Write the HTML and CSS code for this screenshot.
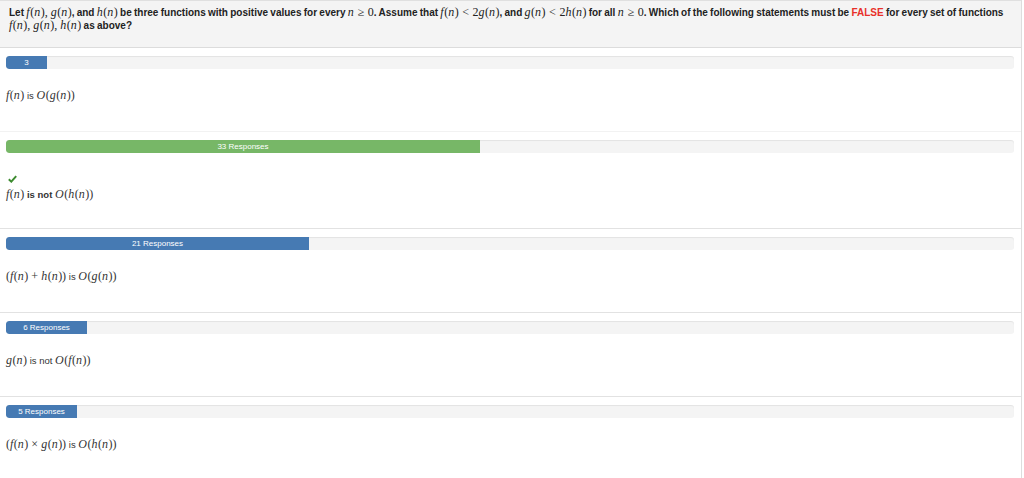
FILE: index.html
```html
<!DOCTYPE html>
<html>
<head>
<meta charset="utf-8">
<link rel="stylesheet" href="styles.css">
</head>
<body>
<div class="panel">
  <div class="question">
    Let <span class="m"><i>f</i>(<i>n</i>)<span class="cm">,</span><i>g</i>(<i>n</i>)</span>, and <span class="m"><i>h</i>(<i>n</i>)</span> be three functions with positive values for every <span class="m"><i>n</i><span class="rel">≥</span>0</span>. Assume that <span class="m"><i>f</i>(<i>n</i>)<span class="rel">&lt;</span>2<i>g</i>(<i>n</i>)</span>, and <span class="m"><i>g</i>(<i>n</i>)<span class="rel">&lt;</span>2<i>h</i>(<i>n</i>)</span> for all <span class="m"><i>n</i><span class="rel">≥</span>0</span>. Which of the following statements must be <span class="false">FALSE</span> for every set of functions <span class="m"><i>f</i>(<i>n</i>)<span class="cm">,</span><i>g</i>(<i>n</i>)<span class="cm">,</span><i>h</i>(<i>n</i>)</span> as above?
  </div>

  <div class="row row-light">
    <div class="track"><div class="fill blue" style="width:41px">3</div></div>
    <div class="answer"><span class="m"><i>f</i>(<i>n</i>)</span> is <span class="m"><i>O</i>(<i>g</i>(<i>n</i>))</span></div>
  </div>

  <div class="row">
    <div class="track"><div class="fill green" style="width:474px">33 Responses</div></div>
    <div class="check"><svg width="9" height="8" viewBox="0 0 9 8"><path d="M0.8 4.2 L3.3 6.6 L8.2 1.2" fill="none" stroke="#3d8b2f" stroke-width="2"/></svg></div>
    <div class="answer correct"><span class="m"><i>f</i>(<i>n</i>)</span> <b>is not</b> <span class="m"><i>O</i>(<i>h</i>(<i>n</i>))</span></div>
  </div>

  <div class="row">
    <div class="track"><div class="fill blue" style="width:303px">21 Responses</div></div>
    <div class="answer"><span class="m">(<i>f</i>(<i>n</i>)<span class="rel">+</span><i>h</i>(<i>n</i>))</span> is <span class="m"><i>O</i>(<i>g</i>(<i>n</i>))</span></div>
  </div>

  <div class="row">
    <div class="track"><div class="fill blue" style="width:81px">6 Responses</div></div>
    <div class="answer"><span class="m"><i>g</i>(<i>n</i>)</span> is not <span class="m"><i>O</i>(<i>f</i>(<i>n</i>))</span></div>
  </div>

  <div class="row last">
    <div class="track"><div class="fill blue" style="width:71px">5 Responses</div></div>
    <div class="answer"><span class="m">(<i>f</i>(<i>n</i>)<span class="rel">×</span><i>g</i>(<i>n</i>))</span> is <span class="m"><i>O</i>(<i>h</i>(<i>n</i>))</span></div>
  </div>
</div>
</body>
</html>
```

FILE: styles.css
```css
html, body {
  margin: 0;
  padding: 0;
  background: #fff;
}
body {
  font-family: "Liberation Sans", Arial, sans-serif;
  color: #333;
}
.panel {
  width: 1021px;
  height: 478px;
  border-right: 1px solid #dddddd;
  box-sizing: content-box;
  overflow: hidden;
}
.question {
  background: #f4f4f4;
  border-top: 1px solid #e0e0e0;
  border-bottom: 1px solid #dcdcdc;
  height: 39px;
  padding: 5px 4px 2px 9px;
  font-size: 10px;
  font-weight: bold;
  word-spacing: -0.5px;
  line-height: 12px;
  color: #222;
}
.m {
  font-family: "Liberation Serif", "Times New Roman", serif;
  font-weight: normal;
  font-size: 12px;
  word-spacing: 0;
}
.m i {
  font-style: italic;
  margin-right: 0.5px;
}
.rel {
  margin: 0 3.5px;
}
.cm {
  margin-right: 3px;
}
.false {
  color: #e8302a;
}
.row {
  padding: 8px 7px 0 6px;
  height: 75px;
  border-bottom: 1px solid #e2e2e2;
}
.row-light {
  border-bottom-color: #f2f2f2;
}
.row.last {
  border-bottom: none;
}
.row:nth-child(3) {
  height: 88px;
}
.track {
  height: 13px;
  background: #f4f4f4;
  border-radius: 3px;
  box-shadow: inset 0 1px 1px rgba(0,0,0,0.07);
  display: flex;
  overflow: hidden;
}
.fill {
  height: 13px;
  color: #fff;
  font-size: 8px;
  line-height: 13px;
  text-align: center;
  white-space: nowrap;
  border-radius: 3px 0 0 3px;
}
.blue {
  background: #467ab3;
}
.green {
  background: #77b767;
}
.check {
  margin-top: 19px;
  height: 14px;
  padding-left: 2px;
  display: flex;
  align-items: center;
}
.answer {
  margin-top: 19px;
  font-size: 9.5px;
  line-height: 14px;
  color: #333;
}
.answer .m {
  font-size: 12px;
}
.answer .rel {
  margin: 0 3px;
}
.check + .answer {
  margin-top: 1px;
}
.answer b {
  font-weight: bold;
}
```
